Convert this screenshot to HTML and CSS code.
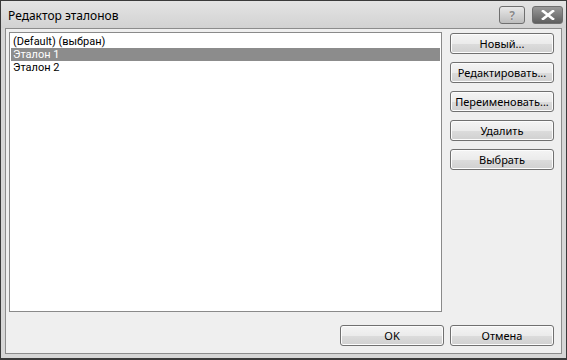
FILE: index.html
```html
<!DOCTYPE html>
<html lang="ru">
<head>
    <meta charset="UTF-8">
    <title>Редактор эталонов</title>
    <link rel="stylesheet" href="styles.css">
</head>
<body>
    <div class="window">
        <div class="titlebar">
            <div class="title">Редактор эталонов</div>
            <div class="caption-buttons">
                <div class="cap-btn help">?</div>
                <div class="cap-btn close">
                    <svg width="14" height="10" viewBox="0 0 14 10">
                        <path d="M2 1 L12 9 M12 1 L2 9" stroke="#fff" stroke-width="2.6" stroke-linecap="square"/>
                    </svg>
                </div>
            </div>
        </div>

        <div class="client">
            <div class="main">
                <div class="listbox">
                    <div class="item">(Default) (выбран)</div>
                    <div class="item selected">Эталон 1</div>
                    <div class="item">Эталон 2</div>
                </div>
                <div class="side-buttons">
                    <div class="btn">Новый...</div>
                    <div class="btn">Редактировать...</div>
                    <div class="btn">Переименовать...</div>
                    <div class="btn">Удалить</div>
                    <div class="btn">Выбрать</div>
                </div>
            </div>
            <div class="footer">
                <div class="btn">OK</div>
                <div class="btn">Отмена</div>
            </div>
        </div>
    </div>
</body>
</html>
```

FILE: styles.css
```css
body {
    margin: 0;
    width: 567px;
    height: 360px;
    font-family: "Noto Sans", "Open Sans", sans-serif;
    font-size: 11px;
    color: #000;
    background: #fff;
}

.window {
    box-sizing: border-box;
    width: 567px;
    height: 360px;
    border: 1px solid #3a3a3a;
    border-bottom-width: 2px;
    background: #d6d6d6;
    display: flex;
    flex-direction: column;
}

.titlebar {
    height: 27px;
    display: flex;
    align-items: center;
    justify-content: space-between;
    padding: 0 3px 0 7px;
    background: linear-gradient(#e4e4e4, #d2d2d2);
}

.title {
    font-size: 12px;
    padding-top: 2px;
}

.caption-buttons {
    display: flex;
    gap: 7px;
    align-self: flex-start;
    margin-top: 5px;
}

.cap-btn {
    box-sizing: border-box;
    height: 18px;
    border: 1px solid #6f6f6f;
    border-radius: 3px;
    display: flex;
    align-items: center;
    justify-content: center;
}

.help {
    width: 26px;
    background: linear-gradient(#e8e8e8, #bdbdbd);
    color: #8a8a8a;
    font-weight: bold;
    font-size: 12px;
    text-shadow: 0 0 1px #fff;
}

.close {
    width: 31px;
    background: linear-gradient(#9a9a9a, #5e5e5e);
}

.client {
    flex: 1;
    margin: 0 4px 4px 4px;
    border: 1px solid #8c8c8c;
    background: #efefef;
    display: flex;
    flex-direction: column;
    padding: 3px 7px 0 3px;
}

.main {
    display: flex;
    gap: 8px;
    height: 280px;
}

.listbox {
    box-sizing: border-box;
    width: 433px;
    height: 280px;
    background: #fff;
    border: 1px solid #8a8a8a;
    padding: 2px 1px;
    font-family: Roboto, "Noto Sans", sans-serif;
    font-size: 11px;
}

.item {
    height: 13px;
    line-height: 13px;
    padding-left: 2px;
}

.item.selected {
    background: #8c8c8c;
    color: #fff;
}

.side-buttons {
    display: flex;
    flex-direction: column;
    gap: 8px;
    margin-top: 1px;
}

.btn {
    box-sizing: border-box;
    width: 104px;
    height: 21px;
    border: 1px solid #707070;
    border-radius: 3px;
    background: linear-gradient(#f4f4f4 0%, #ebebeb 50%, #dcdcdc 51%, #d0d0d0 100%);
    box-shadow: inset 0 0 0 1px #fcfcfc;
    display: flex;
    align-items: center;
    justify-content: center;
}

.footer {
    display: flex;
    justify-content: flex-end;
    gap: 6px;
    margin-top: 13px;
}
```
